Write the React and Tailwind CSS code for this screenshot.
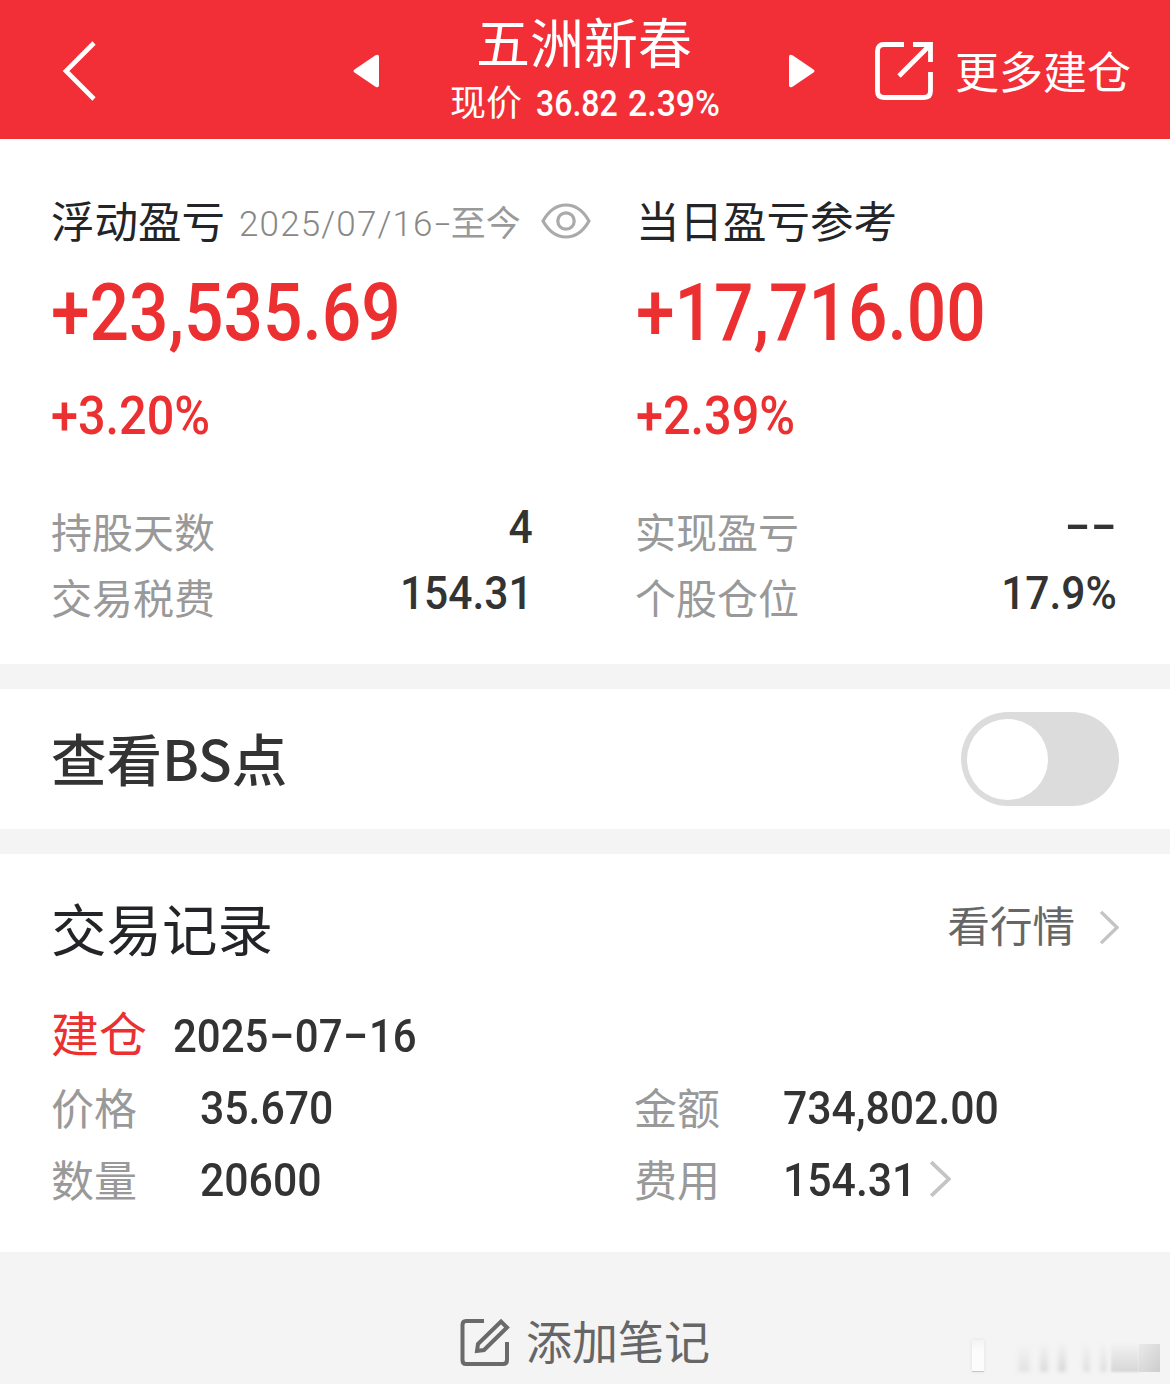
import React, { useState } from 'react';
import clsx from 'clsx';

// condensed figures used for every amount on the page, with long dashes
const Num = ({ className, children }) => (
  <span className={clsx("inline-block shrink-0 whitespace-nowrap font-[Roboto,sans-serif] font-medium", className)}>
    {children.split(/(-)/).map((part, i) =>
      part === '-' ? (
        <span key={i} className="inline-block w-[29px] -translate-y-[2px] scale-x-[1.75] text-center">-</span>
      ) : part
    )}
  </span>
);

const ChevronRight = ({ className }) => (
  <svg viewBox="0 0 20 36" className={className} fill="none" stroke="#c4c4c4" strokeWidth="3.4" preserveAspectRatio="none">
    <path d="M2 2 L18 18 L2 34" />
  </svg>
);

const Header = () => (
  <header className="flex h-[139px] items-center bg-[#f22f37] pt-[3px] text-white">
    <svg viewBox="0 0 34 60" className="ml-[62px] h-[60px] w-[34px]" fill="none" stroke="white" strokeWidth="4.6">
      <path d="M32 2 L4 30 L32 58" />
    </svg>
    <svg viewBox="0 0 26 34" className="ml-[257px] h-[34px] w-[26px]" fill="white">
      <path d="M22.5 1.2 Q26 -0.5 26 3 V31 Q26 34.5 22.5 32.8 L1.5 18.6 Q-0.5 17 1.5 15.4 Z" />
    </svg>
    <div className="flex h-full w-[410px] flex-col items-center">
      <h1 className="mt-[6px] h-[68px] text-[54px] leading-[64px]">五洲新春</h1>
      <div className="flex w-[268px] items-center leading-[46px]">
        <span className="w-[86px] shrink-0 text-[36px]">现价</span>
        <Num className="w-[92px] origin-left translate-y-[4px] scale-x-[0.89] text-[36px]">36.82</Num>
        <Num className="origin-left translate-y-[4px] scale-x-[0.94] text-[36px]">2.39%</Num>
      </div>
    </div>
    <svg viewBox="0 0 26 34" className="h-[34px] w-[26px]" fill="white">
      <path d="M3.5 1.2 Q0 -0.5 0 3 V31 Q0 34.5 3.5 32.8 L24.5 18.6 Q26.5 17 24.5 15.4 Z" />
    </svg>
    <svg viewBox="0 0 58 58" className="ml-[60px] h-[58px] w-[58px]" fill="none" stroke="white" strokeWidth="4.8">
      <path d="M29 2.5 H9 Q2.5 2.5 2.5 9 V49 Q2.5 55.5 9 55.5 H49 Q55.5 55.5 55.5 49 V30" />
      <path d="M38 2.5 H55.5 V20 M55 3 L24 34" />
    </svg>
    <span className="mb-[3px] ml-[22px] text-[44px] leading-[60px]">更多建仓</span>
  </header>
);

const StatRow = ({ label, value }) => (
  <div className="flex h-[66px] items-center justify-between">
    <span className="text-[41px] text-[#999]">{label}</span>
    <Num className="mb-[7px] origin-right translate-x-[1px] scale-x-[0.905] text-[47px] text-[#333]">{value}</Num>
  </div>
);

const Profit = ({ amount, percent, hidden }) => (
  <div className="flex flex-col items-start text-[#ec2f30]">
    <Num className="mt-[12px] origin-left scale-x-[0.868] text-[80px] leading-[97px]">
      {hidden ? "****" : amount}
    </Num>
    <Num className="mt-[14px] origin-left scale-x-[0.9] text-[54px] leading-[80px]">
      {hidden ? "****" : percent}
    </Num>
  </div>
);

const Summary = () => {
  const [hidden, setHidden] = useState(false);
  return (
    <section className="flex h-[525px] pl-[51px] pr-[54px]">
      <div className="w-[585px] shrink-0">
        <div className="mt-[49px] flex h-[65px] items-center">
          <h2 className="mb-[2px] w-[188px] text-[43.5px] text-[#222428]">浮动盈亏</h2>
          <span className="mt-[9px] w-[302px] whitespace-nowrap font-[Roboto,'Noto_Sans_CJK_SC',sans-serif] text-[35px] text-[#999]">
            <span className="font-light tracking-[1.15px] text-[#888]">2025/07/16</span>
            <span className="inline-block w-[17px] -translate-y-px scale-x-[1.6] text-center font-light text-[#888]">-</span>
            至今
          </span>
          <button type="button" onClick={() => setHidden(!hidden)}>
            <svg viewBox="0 0 50 36" className="h-[36px] w-[50px]" fill="none" stroke="#aaa" strokeWidth="3.2">
              <path d="M2 18 Q11 2 25 2 Q39 2 48 18 Q39 34 25 34 Q11 34 2 18 Z" />
              <circle cx="25" cy="18" r="8.2" />
            </svg>
          </button>
        </div>
        <Profit amount="+23,535.69" percent="+3.20%" hidden={hidden} />
        <div className="mt-[42px] w-[481px]">
          <StatRow label="持股天数" value="4" />
          <StatRow label="交易税费" value="154.31" />
        </div>
      </div>
      <div className="w-[480px]">
        <div className="mt-[49px] flex h-[65px] items-center">
          <h2 className="mb-[2px] text-[43.5px] text-[#222428]">当日盈亏参考</h2>
        </div>
        <Profit amount="+17,716.00" percent="+2.39%" hidden={hidden} />
        <div className="ml-[-1px] mt-[42px]">
          <StatRow label="实现盈亏" value="--" />
          <StatRow label="个股仓位" value="17.9%" />
        </div>
      </div>
    </section>
  );
};

const BsToggle = () => {
  const [on, setOn] = useState(false);
  return (
    <section className="flex h-[140px] items-center justify-between pl-[51px] pr-[51px]">
      <h2 className="mb-[3px] text-[55.5px] font-medium text-[#333]">查看BS点</h2>
      <button
        type="button"
        role="switch"
        aria-checked={on}
        onClick={() => setOn(!on)}
        className={clsx("flex h-[94px] w-[158px] items-center rounded-full px-[6px]", on ? "justify-end bg-[#ec2f30]" : "bg-[#dcdcdc]")}
      >
        <span className="size-[81px] rounded-full bg-white" />
      </button>
    </section>
  );
};

const Field = ({ label, value, arrow }) => (
  <div className="flex h-[72px] items-center">
    <span className="mb-[2px] w-[149px] text-[43px] text-[#999]">{label}</span>
    <Num className="mt-[2px] origin-left scale-x-[0.91] text-[47px] text-[#333]">{value}</Num>
    {arrow && <ChevronRight className="ml-[-1px] h-[38px] w-[22px]" />}
  </div>
);

const Records = () => (
  <section className="h-[398px] px-[51px]">
    <div className="flex h-[149px] items-center">
      <h2 className="mb-[2px] grow text-[55.5px] text-[#222428]">交易记录</h2>
      <a className="flex items-center text-[42.5px] text-[#666]">
        <span className="mb-[9px]">看行情</span>
        <ChevronRight className="ml-[24px] mt-[-2px] h-[35px] w-[20px]" />
      </a>
    </div>
    <div className="mt-[-4px] flex h-[72px] items-center">
      <span className="mb-[8px] w-[122px] text-[48px] text-[#ec2f30]">建仓</span>
      <Num className="mt-[2px] origin-left scale-x-[0.912] text-[46px] text-[#333]">2025-07-16</Num>
    </div>
    <div className="grid grid-cols-[583px_1fr]">
      <Field label="价格" value="35.670" />
      <Field label="金额" value="734,802.00" />
      <Field label="数量" value="20600" />
      <Field label="费用" value="154.31" arrow />
    </div>
  </section>
);

const Footer = () => (
  <footer className="relative flex h-[132px] items-center justify-center bg-[#f4f4f4] pt-[46px] text-[#666]">
    <svg viewBox="0 0 50 50" className="mt-[4px] h-[50px] w-[50px]" fill="none" stroke="#6a6a6a" strokeWidth="4">
      <path d="M24 3 H6 Q2.5 3 2.5 7 V42 Q2.5 46 6 46 H43 Q47 46 47 42 V24" />
      <path d="M17 33 L18 26 L41 3.5 L47 9.5 L24 32 Z" />
    </svg>
    <span className="mb-[4px] ml-[16px] text-[46px] leading-[60px]">添加笔记</span>
    {/* faded watermark strip */}
    <div className="absolute bottom-[12px] right-[10px] flex h-[34px] w-[192px] items-end opacity-80">
      <div className="ml-1 h-[32px] w-[12px] shrink-0 border-b border-[#bbb] bg-linear-to-b from-[#f4f4f4] to-white to-40% shadow-[0_0_4px_#ddd]" />
      <div className="ml-[34px] h-[28px] w-[12px] bg-linear-to-b from-transparent to-[#dedede] blur-[2px]" />
      <div className="ml-[10px] h-[30px] w-[8px] bg-linear-to-b from-transparent to-[#d4d4d4] blur-[2px]" />
      <div className="ml-[10px] h-[30px] w-[8px] bg-linear-to-b from-transparent to-[#d0d0d0] blur-[2px]" />
      <div className="ml-[17px] h-[30px] w-[7px] bg-linear-to-b from-transparent to-[#dadada] blur-[2px]" />
      <div className="ml-[10px] h-[30px] w-[7px] bg-linear-to-b from-transparent to-[#dadada] blur-[2px]" />
      <div className="ml-[4px] h-[30px] w-[28px] bg-linear-to-b from-transparent to-[#cfcfcf] blur-[1px]" />
      <div className="h-[28px] w-[21px] bg-linear-to-br from-[#e8e8e8] to-[#c4c4c4]" />
    </div>
  </footer>
);

export default function App() {
  return (
    <div className="h-[1384px] w-[1170px] overflow-hidden bg-white font-['Noto_Sans_CJK_SC',sans-serif]">
      <Header />
      <Summary />
      <div className="h-[25px] bg-[#f4f4f4]" />
      <BsToggle />
      <div className="h-[25px] bg-[#f4f4f4]" />
      <Records />
      <Footer />
    </div>
  );
}
